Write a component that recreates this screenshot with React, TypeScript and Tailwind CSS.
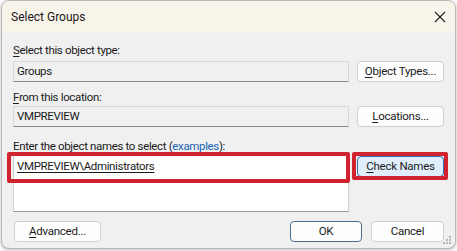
import React from "react";

const font = { fontFamily: 'Roboto, "Noto Sans", sans-serif' };

function Btn({
  children,
  className = "",
}: {
  children: React.ReactNode;
  className?: string;
}) {
  return (
    <div
      className={
        "flex items-center justify-center h-[21px] rounded-[4px] border text-[11.5px] leading-none text-[#1b1b1b] tracking-[-0.25px] " +
        className
      }
    >
      {children}
    </div>
  );
}

function Grip() {
  const dots = [
    [6, 0],
    [3, 3],
    [6, 3],
    [0, 6],
    [3, 6],
    [6, 6],
  ];
  return (
    <svg width="9" height="9" className="absolute right-[3px] bottom-[3px]">
      {dots.map(([x, y], i) => (
        <rect key={i} x={x} y={y} width="2" height="2" fill="#b5b5b5" />
      ))}
    </svg>
  );
}

export default function App() {
  return (
    <div className="w-[457px] h-[251px] bg-[#fafafa] overflow-hidden" style={font}>
      <div className="relative ml-[1px] w-[455px] h-[249px] rounded-[8px] border border-[#b9b9b9] bg-[#f0f0f0] overflow-hidden flex flex-col shadow-[0_1px_3px_rgba(0,0,0,0.25)]">
        {/* title bar */}
        <div className="h-[32px] bg-[#f9f4ea] flex items-center justify-between pl-[9px] pr-[8px] shrink-0">
          <span className="text-[12px] text-[#1a1a1a]">Select Groups</span>
          <svg width="12" height="12" viewBox="0 0 12 12" className="mr-[1px]">
            <path d="M1 1 L11 11 M11 1 L1 11" stroke="#222" strokeWidth="1.1" />
          </svg>
        </div>

        {/* body */}
        <div className="flex flex-col pl-[11px] pr-[11px] pt-[9px] text-[11.5px] text-[#1b1b1b] tracking-[-0.35px]">
          <div className="h-[16px] leading-[16px]">
            <span className="underline underline-offset-[2px]">S</span>elect this object type:
          </div>
          <div className="flex gap-[8px] mt-[3px]">
            <div className="w-[336px] h-[21px] border border-[#d9d9d9] border-b-[#8c8c8c] bg-[#f0f0f0] flex items-center pl-[3px] leading-none">
              Groups
            </div>
            <Btn className="w-[87px] bg-[#fdfdfd] border-[#d0d0d0]">
              <span>
                <span className="underline underline-offset-[2px]">O</span>bject Types...
              </span>
            </Btn>
          </div>

          <div className="h-[16px] leading-[16px] mt-[7px]">
            <span className="underline underline-offset-[2px]">F</span>rom this location:
          </div>
          <div className="flex gap-[8px] mt-[1px]">
            <div className="w-[336px] h-[21px] border border-[#d9d9d9] border-b-[#8c8c8c] bg-[#f0f0f0] flex items-center pl-[3px] leading-none">
              VMPREVIEW
            </div>
            <Btn className="w-[87px] bg-[#fdfdfd] border-[#d0d0d0]">
              <span>
                <span className="underline underline-offset-[2px]">L</span>ocations...
              </span>
            </Btn>
          </div>

          <div className="h-[16px] leading-[16px] mt-[11px]">
            <span className="underline underline-offset-[2px]">E</span>nter the object names to select (
            <span className="text-[#1c64b4] underline underline-offset-[2px]">examples</span>):
          </div>
          <div className="flex gap-[8px]">
            <div className="relative w-[336px] h-[58px] border border-[#d0d0d0] border-b-[#9a9a9a] bg-white pl-[3px] pt-[4px] leading-[14px]">
              <span className="underline underline-offset-[2px]">VMPREVIEW\Administrators</span>
              <div className="absolute left-[-7px] top-[-3px] w-[343px] h-[31px] border-[4px] border-[#d1232f] rounded-[2px]" />
            </div>
            <div className="relative w-[87px] h-[21px] mt-[2px]">
              <Btn className="w-[87px] bg-[#dfeefa] border-[#2f6fb2]">
                <span>
                  <span className="underline underline-offset-[2px]">C</span>heck Names
                </span>
              </Btn>
              <div className="absolute left-[-5px] top-[-4px] w-[96px] h-[28px] border-[4px] border-[#d1232f] rounded-[2px]" />
            </div>
          </div>

          <div className="flex mt-[9px] items-center">
            <Btn className="w-[87px] ml-[1px] bg-[#fdfdfd] border-[#d0d0d0]">
              <span>
                <span className="underline underline-offset-[2px]">A</span>dvanced...
              </span>
            </Btn>
            <div className="flex-1" />
            <Btn className="w-[72px] bg-[#fdfdfd] border-[#4a6f93]">OK</Btn>
            <Btn className="w-[73px] ml-[9px] bg-[#fdfdfd] border-[#d0d0d0]">Cancel</Btn>
          </div>
        </div>
        <Grip />
      </div>
    </div>
  );
}
